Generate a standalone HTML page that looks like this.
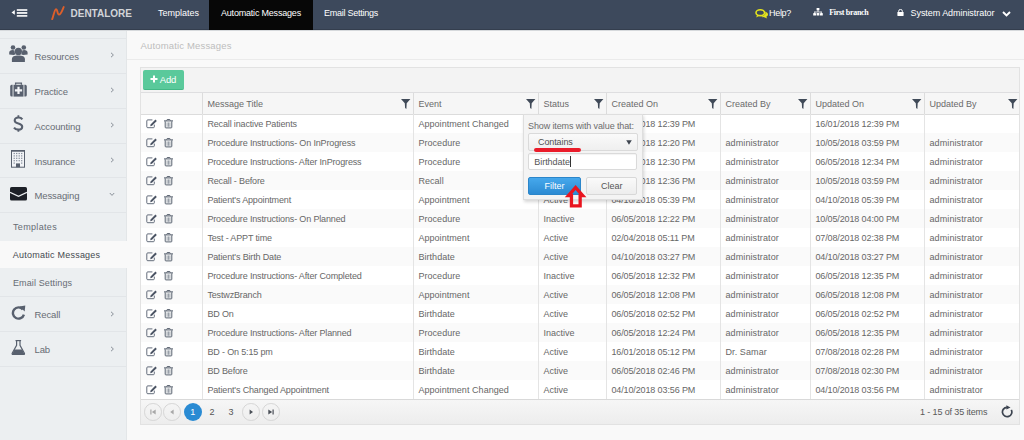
<!DOCTYPE html>
<html><head><meta charset="utf-8">
<style>
*{margin:0;padding:0;box-sizing:border-box}
html,body{width:1024px;height:440px;overflow:hidden;background:#f9f9f9;font-family:"Liberation Sans",sans-serif;font-size:9px;color:#5b5b5b}
.a{position:absolute;white-space:nowrap;line-height:10px}
svg{display:block}
</style></head><body>

<div class="a" style="left:0;top:0;width:1024px;height:29px;background:#3d495c"></div>
<div class="a" style="left:0;top:29px;width:1024px;height:1px;background:#343e4e"></div>
<div class="a" style="left:0;top:30px;width:1024px;height:1px;background:#d6d9dc"></div>
<svg class="a" style="left:11px;top:9px" width="17" height="8" viewBox="0 0 17 8"><path d="M0.5 3.4L3.8 1V5.8Z" fill="#fff"/><rect x="5.8" y="0.2" width="10.5" height="1.6" fill="#fff"/><rect x="5.8" y="3.1" width="10.5" height="1.7" fill="#fff"/><rect x="5.8" y="6.1" width="10.5" height="1.6" fill="#fff"/></svg>
<svg class="a" style="left:51px;top:6px" width="14" height="14" viewBox="0 0 14 14"><path d="M1.2 13.2C2.4 10 3.6 3.3 5.1 3.1C6.5 2.9 6.2 8.6 8 8.6C10 8.6 11.6 3.6 12.7 1" fill="none" stroke="#de5f2a" stroke-width="1.9" stroke-linecap="round"/></svg>
<div class="a" style="left:70.5px;top:8px;font-size:10px;font-weight:bold;color:#d2d4d8;line-height:11px">DENTALORE</div>
<div class="a" style="left:158px;top:8px;color:#fff">Templates</div>
<div class="a" style="left:209.4px;top:0;width:103.4px;height:30px;background:#070707"></div>
<div class="a" style="left:221px;top:8px;color:#fff;letter-spacing:-0.2px">Automatic Messages</div>
<div class="a" style="left:324px;top:8px;color:#fff;letter-spacing:-0.25px">Email Settings</div>
<svg class="a" style="left:755px;top:9px" width="14" height="10" viewBox="0 0 14 10"><path d="M6.2 6.6C8.6 6.6 10.4 5.3 10.4 3.6C10.4 1.9 8.6 0.8 6.2 0.8" fill="none"/><path d="M9.6 2.6C11.8 3.1 13 4.3 13 5.6C13 6.6 12.3 7.4 11.3 7.8L12.2 9.6L9.2 8.3C8 8.3 7 8 6.3 7.4C8.8 7.1 10.6 5.5 10.4 3.6Z" fill="#e4e41c"/><ellipse cx="5.3" cy="3.7" rx="4.3" ry="2.9" fill="none" stroke="#e4e41c" stroke-width="1.6"/><path d="M2.2 5.8L1.2 8.6L4.8 6.6Z" fill="#e4e41c"/></svg>
<div class="a" style="left:769px;top:7.8px;color:#fff;letter-spacing:-0.3px">Help?</div>
<svg class="a" style="left:813px;top:8.2px" width="10" height="8" viewBox="0 0 10 8"><rect x="3.6" y="0" width="2.8" height="2.4" rx="0.4" fill="#fff"/><rect x="4.6" y="2.4" width="0.8" height="1.6" fill="#fff"/><rect x="1.4" y="3.6" width="7.2" height="0.8" fill="#fff"/><rect x="1.4" y="3.6" width="0.8" height="1.4" fill="#fff"/><rect x="7.8" y="3.6" width="0.8" height="1.4" fill="#fff"/><rect x="0.2" y="5" width="2.8" height="2.6" rx="0.4" fill="#fff"/><rect x="3.6" y="5" width="2.8" height="2.6" rx="0.4" fill="#fff"/><rect x="7" y="5" width="2.8" height="2.6" rx="0.4" fill="#fff"/></svg>
<div class="a" style="left:829.2px;top:7.5px;color:#fff;font-family:'Liberation Serif',serif;font-weight:bold;font-size:8px;letter-spacing:-0.3px">First branch</div>
<svg class="a" style="left:897px;top:9px" width="7" height="7" viewBox="0 0 7 7"><path d="M1.7 3V2.2A1.8 1.8 0 0 1 5.3 2.2V3" fill="none" stroke="#fff" stroke-width="1"/><rect x="0.4" y="3" width="6.2" height="4" rx="0.4" fill="#fff"/></svg>
<div class="a" style="left:910.5px;top:7.8px;color:#fff;letter-spacing:-0.05px">System Administrator</div>
<svg class="a" style="left:1002px;top:11px" width="9" height="6" viewBox="0 0 9 6"><path d="M1 1L4.5 4.5L8 1" fill="none" stroke="#fff" stroke-width="1.9"/></svg>
<div class="a" style="left:0;top:31px;width:126px;height:409px;background:#eceff1"></div>
<div class="a" style="left:126px;top:31px;width:1px;height:409px;background:#e3e6e8"></div>
<div class="a" style="left:0;top:38px;width:126px;height:1px;background:#e2e5e8"></div>
<div class="a" style="left:34.5px;top:51.8px;color:#676c74;font-size:9.5px;letter-spacing:-0.12px">Resources</div>
<svg class="a" style="left:110px;top:52px" width="5" height="6" viewBox="0 0 5 6"><path d="M1 0.8L3.4 3L1 5.2" fill="none" stroke="#8a9099" stroke-width="1"/></svg>
<div class="a" style="left:0;top:73px;width:126px;height:1px;background:#e2e5e8"></div>
<div class="a" style="left:34.5px;top:86.8px;color:#676c74;font-size:9.5px;letter-spacing:-0.12px">Practice</div>
<svg class="a" style="left:110px;top:87px" width="5" height="6" viewBox="0 0 5 6"><path d="M1 0.8L3.4 3L1 5.2" fill="none" stroke="#8a9099" stroke-width="1"/></svg>
<div class="a" style="left:0;top:108px;width:126px;height:1px;background:#e2e5e8"></div>
<div class="a" style="left:34.5px;top:121.8px;color:#676c74;font-size:9.5px;letter-spacing:-0.12px">Accounting</div>
<svg class="a" style="left:110px;top:122px" width="5" height="6" viewBox="0 0 5 6"><path d="M1 0.8L3.4 3L1 5.2" fill="none" stroke="#8a9099" stroke-width="1"/></svg>
<div class="a" style="left:0;top:142.6px;width:126px;height:1px;background:#e2e5e8"></div>
<div class="a" style="left:34.5px;top:156.8px;color:#676c74;font-size:9.5px;letter-spacing:-0.12px">Insurance</div>
<svg class="a" style="left:110px;top:156.6px" width="5" height="6" viewBox="0 0 5 6"><path d="M1 0.8L3.4 3L1 5.2" fill="none" stroke="#8a9099" stroke-width="1"/></svg>
<div class="a" style="left:0;top:177.4px;width:126px;height:1px;background:#e2e5e8"></div>
<div class="a" style="left:34.5px;top:190.8px;color:#676c74;font-size:9.5px;letter-spacing:-0.12px">Messaging</div>
<svg class="a" style="left:109px;top:192.4px" width="6" height="5" viewBox="0 0 6 5"><path d="M0.8 1L3 3.4L5.2 1" fill="none" stroke="#8a9099" stroke-width="1"/></svg>
<div class="a" style="left:0;top:212px;width:126px;height:1px;background:#e2e5e8"></div>
<div class="a" style="left:13px;top:221.5px;color:#676c74;letter-spacing:0.33px">Templates</div>
<div class="a" style="left:0;top:240.6px;width:127px;height:27.6px;background:#f9f9f9"></div>
<div class="a" style="left:12.8px;top:249.5px;color:#45494f;letter-spacing:0.22px">Automatic Messages</div>
<div class="a" style="left:13px;top:277.5px;color:#676c74;letter-spacing:0.12px">Email Settings</div>
<div class="a" style="left:0;top:296px;width:126px;height:1px;background:#e2e5e8"></div>
<div class="a" style="left:0;top:331px;width:126px;height:1px;background:#e2e5e8"></div>
<div class="a" style="left:0;top:366px;width:126px;height:1px;background:#e2e5e8"></div>
<div class="a" style="left:34.5px;top:309.8px;color:#676c74;font-size:9.5px;letter-spacing:-0.12px">Recall</div>
<svg class="a" style="left:110px;top:311px" width="5" height="6" viewBox="0 0 5 6"><path d="M1 0.8L3.4 3L1 5.2" fill="none" stroke="#8a9099" stroke-width="1"/></svg>
<div class="a" style="left:34.5px;top:344.8px;color:#676c74;font-size:9.5px;letter-spacing:-0.12px">Lab</div>
<svg class="a" style="left:110px;top:346px" width="5" height="6" viewBox="0 0 5 6"><path d="M1 0.8L3.4 3L1 5.2" fill="none" stroke="#8a9099" stroke-width="1"/></svg>
<svg class="a" style="left:9px;top:45px" width="19" height="18" viewBox="0 0 19 18"><circle cx="4" cy="2.5" r="2.3" fill="#58606e"/><circle cx="14.8" cy="2.5" r="2.3" fill="#58606e"/><circle cx="9.4" cy="6.4" r="3.6" fill="#58606e"/><path d="M0.2 9.6V7.6C0.2 5.9 1.6 5 3.6 5C4.6 5 5.2 5.2 5.6 5.5C5.5 7 5.9 8.4 6.6 9.3C5.7 9.6 5.1 9.8 4.7 10.1Z" fill="#58606e"/><path d="M18.6 9.6V7.6C18.6 5.9 17.2 5 15.2 5C14.2 5 13.6 5.2 13.2 5.5C13.3 7 12.9 8.4 12.2 9.3C13.1 9.6 13.7 9.8 14.1 10.1Z" fill="#58606e"/><path d="M2.9 17V14.2C2.9 11.4 5.4 10.4 9.4 10.4C13.4 10.4 15.9 11.4 15.9 14.2V17Z" fill="#58606e"/></svg>
<svg class="a" style="left:9.8px;top:81.5px" width="17" height="15" viewBox="0 0 17 15"><path d="M5.6 2.8V1.1H11.4V2.8" fill="none" stroke="#58606e" stroke-width="1.3"/><path d="M2.6 2.8V14.6H1.6Q0.2 14.6 0.2 13V4.4Q0.2 2.8 1.6 2.8Z" fill="#58606e"/><path d="M14.4 2.8V14.6H15.4Q16.8 14.6 16.8 13V4.4Q16.8 2.8 15.4 2.8Z" fill="#58606e"/><rect x="3.5" y="2.8" width="10" height="11.8" fill="#58606e"/><path d="M8.5 4.8V12M4.9 8.4H12.1" stroke="#f4f6f8" stroke-width="2.2"/></svg>
<svg class="a" style="left:13px;top:115px" width="11" height="17" viewBox="0 0 11 17"><path d="M5.4 0.2V2.6M5.4 14.4V16.8" stroke="#58606e" stroke-width="1.8"/><path d="M9.3 4.4C8.6 3.2 7.3 2.5 5.4 2.5C3.2 2.5 1.7 3.6 1.7 5.4C1.7 7.3 3.4 7.9 5.4 8.5C7.5 9.1 9.2 9.9 9.2 11.7C9.2 13.6 7.6 14.6 5.3 14.6C3.4 14.6 1.9 13.9 1.0 12.6" fill="none" stroke="#58606e" stroke-width="2.1"/></svg>
<svg class="a" style="left:11px;top:149.8px" width="14" height="18" viewBox="0 0 14 18"><rect x="0.5" y="0.8" width="13" height="16.4" fill="#f2f4f7" stroke="#58606e" stroke-width="1"/><rect x="0" y="0" width="14" height="1.6" fill="#58606e"/><rect x="2.6" y="2.9" width="1.2" height="1.2" fill="#7d8593"/><rect x="5.1" y="2.9" width="1.2" height="1.2" fill="#7d8593"/><rect x="7.6" y="2.9" width="1.2" height="1.2" fill="#7d8593"/><rect x="10.1" y="2.9" width="1.2" height="1.2" fill="#7d8593"/><rect x="2.6" y="5.3" width="1.2" height="1.2" fill="#7d8593"/><rect x="5.1" y="5.3" width="1.2" height="1.2" fill="#7d8593"/><rect x="7.6" y="5.3" width="1.2" height="1.2" fill="#7d8593"/><rect x="10.1" y="5.3" width="1.2" height="1.2" fill="#7d8593"/><rect x="2.6" y="7.699999999999999" width="1.2" height="1.2" fill="#7d8593"/><rect x="5.1" y="7.699999999999999" width="1.2" height="1.2" fill="#7d8593"/><rect x="7.6" y="7.699999999999999" width="1.2" height="1.2" fill="#7d8593"/><rect x="10.1" y="7.699999999999999" width="1.2" height="1.2" fill="#7d8593"/><rect x="2.6" y="10.1" width="1.2" height="1.2" fill="#7d8593"/><rect x="5.1" y="10.1" width="1.2" height="1.2" fill="#7d8593"/><rect x="7.6" y="10.1" width="1.2" height="1.2" fill="#7d8593"/><rect x="10.1" y="10.1" width="1.2" height="1.2" fill="#7d8593"/><rect x="2.6" y="12.5" width="1.2" height="1.2" fill="#7d8593"/><rect x="10.1" y="12.5" width="1.2" height="1.2" fill="#7d8593"/><rect x="5" y="13.4" width="4" height="3.8" fill="#58606e"/></svg>
<svg class="a" style="left:10px;top:187px" width="17" height="14" viewBox="0 0 17 14"><rect x="0" y="0" width="17" height="13.6" rx="1.6" fill="#1d2027"/><path d="M0 5.4L8.5 9.3L17 5.4" fill="none" stroke="#eceff1" stroke-width="1.3"/></svg>
<svg class="a" style="left:11px;top:305px" width="15" height="15" viewBox="0 0 15 15"><path d="M11.8 4.4A5.6 5.6 0 1 0 12.9 9.6" fill="none" stroke="#58606e" stroke-width="2.4"/><path d="M8.4 1.4L14.3 0.6L13.7 6.6Z" fill="#58606e"/></svg>
<svg class="a" style="left:11px;top:340px" width="15" height="15" viewBox="0 0 15 15"><path d="M4.5 0.6H10.1" stroke="#58606e" stroke-width="1.2"/><path d="M5.6 0.8V5.4L1.2 13.2Q0.8 14.4 2 14.4H12.6Q13.8 14.4 13.4 13.2L9 5.4V0.8" fill="none" stroke="#58606e" stroke-width="1.2"/><path d="M3.4 9.5H11.2L13.4 14.2H1.2Z" fill="#58606e"/></svg>
<div class="a" style="left:140.5px;top:40.5px;color:#bdbdbd;font-size:9.5px;letter-spacing:0.16px">Automatic Messages</div>
<div class="a" style="left:127px;top:59px;width:897px;height:1px;background:#ebebeb"></div>
<div class="a" style="left:140px;top:67px;width:880px;height:357.5px;border:1px solid #e2e2e2;background:#fff"></div>
<div class="a" style="left:141px;top:68px;width:878px;height:25px;background:#f3f3f3;border-bottom:1px solid #dedee0"></div>
<div class="a" style="left:142.9px;top:70px;width:41.1px;height:19.8px;background:#5ac99b;border-bottom:1px solid #43b886;border-radius:2px"></div>
<svg class="a" style="left:149.8px;top:75.3px" width="8" height="8" viewBox="0 0 8 8"><path d="M4 0.5V7.5M0.5 4H7.5" stroke="#fff" stroke-width="2"/></svg>
<div class="a" style="left:159.8px;top:75.2px;color:#fff;font-size:9.5px;letter-spacing:-0.2px">Add</div>
<div class="a" style="left:141px;top:93px;width:878px;height:21px;background:#f6f6f6"></div>
<div class="a" style="left:202px;top:93px;width:1px;height:20.5px;background:#dcdcdc"></div>
<div class="a" style="left:207.4px;top:98.5px;color:#6a6a6a">Message Title</div>
<div class="a" style="left:401px;top:99px"><svg width="10" height="11" viewBox="0 0 10 11"><path d="M0 0.1H9.4L5.7 4.3L5.4 10L4.1 9L3.8 4.3Z" fill="#404a58"/></svg></div>
<div class="a" style="left:413px;top:93px;width:1px;height:20.5px;background:#dcdcdc"></div>
<div class="a" style="left:418.4px;top:98.5px;color:#6a6a6a">Event</div>
<div class="a" style="left:526px;top:99px"><svg width="10" height="11" viewBox="0 0 10 11"><path d="M0 0.1H9.4L5.7 4.3L5.4 10L4.1 9L3.8 4.3Z" fill="#404a58"/></svg></div>
<div class="a" style="left:538px;top:93px;width:1px;height:20.5px;background:#dcdcdc"></div>
<div class="a" style="left:543.4px;top:98.5px;color:#6a6a6a">Status</div>
<div class="a" style="left:594px;top:99px"><svg width="10" height="11" viewBox="0 0 10 11"><path d="M0 0.1H9.4L5.7 4.3L5.4 10L4.1 9L3.8 4.3Z" fill="#404a58"/></svg></div>
<div class="a" style="left:606px;top:93px;width:1px;height:20.5px;background:#dcdcdc"></div>
<div class="a" style="left:611.4px;top:98.5px;color:#6a6a6a">Created On</div>
<div class="a" style="left:708px;top:99px"><svg width="10" height="11" viewBox="0 0 10 11"><path d="M0 0.1H9.4L5.7 4.3L5.4 10L4.1 9L3.8 4.3Z" fill="#404a58"/></svg></div>
<div class="a" style="left:720px;top:93px;width:1px;height:20.5px;background:#dcdcdc"></div>
<div class="a" style="left:725.4px;top:98.5px;color:#6a6a6a">Created By</div>
<div class="a" style="left:798px;top:99px"><svg width="10" height="11" viewBox="0 0 10 11"><path d="M0 0.1H9.4L5.7 4.3L5.4 10L4.1 9L3.8 4.3Z" fill="#404a58"/></svg></div>
<div class="a" style="left:810px;top:93px;width:1px;height:20.5px;background:#dcdcdc"></div>
<div class="a" style="left:815.4px;top:98.5px;color:#6a6a6a">Updated On</div>
<div class="a" style="left:912px;top:99px"><svg width="10" height="11" viewBox="0 0 10 11"><path d="M0 0.1H9.4L5.7 4.3L5.4 10L4.1 9L3.8 4.3Z" fill="#404a58"/></svg></div>
<div class="a" style="left:924px;top:93px;width:1px;height:20.5px;background:#dcdcdc"></div>
<div class="a" style="left:929.4px;top:98.5px;color:#6a6a6a">Updated By</div>
<div class="a" style="left:1007.5px;top:99px"><svg width="10" height="11" viewBox="0 0 10 11"><path d="M0 0.1H9.4L5.7 4.3L5.4 10L4.1 9L3.8 4.3Z" fill="#404a58"/></svg></div>
<div class="a" style="left:141px;top:114.0px;width:878px;height:19px;background:#fff"></div>
<div class="a" style="left:146px;top:118.7px"><svg width="11" height="10" viewBox="0 0 11 10"><path d="M6.4 0.9H1.8Q0.8 0.9 0.8 1.9V7.8Q0.8 8.7 1.8 8.7H7.4Q8.3 8.7 8.3 7.8V5.6" fill="none" stroke="#5c6574" stroke-width="0.95"/><path d="M4.2 7.2L4.6 5.4L9.4 0.6L10.8 2L6 6.8Z" fill="#4a5363"/></svg></div>
<div class="a" style="left:163.6px;top:118.9px"><svg width="9" height="10" viewBox="0 0 9 10"><path d="M2.6 1.5L3.2 0.5H5.8L6.4 1.5" fill="none" stroke="#4f5867" stroke-width="0.9"/><rect x="0" y="1.4" width="9" height="1" fill="#4f5867"/><path d="M1.2 2.4V8.2Q1.2 8.9 1.9 8.9H7.1Q7.8 8.9 7.8 8.2V2.4" fill="none" stroke="#4f5867" stroke-width="0.95"/><path d="M3.1 3.4V7.8M4.5 3.4V7.8M5.9 3.4V7.8" stroke="#6f7885" stroke-width="0.7"/></svg></div>
<div class="a" style="left:207.4px;top:119.2px;color:#676767;letter-spacing:-0.15px">Recall inactive Patients</div>
<div class="a" style="left:418.4px;top:119.2px;color:#676767;letter-spacing:0.05px">Appointment Changed</div>
<div class="a" style="left:611.4px;top:119.2px;color:#676767;letter-spacing:-0.12px">04/10/2018 12:39 PM</div>
<div class="a" style="left:815.4px;top:119.2px;color:#676767;letter-spacing:-0.12px">16/01/2018 12:39 PM</div>
<div class="a" style="left:141px;top:133.0px;width:878px;height:19px;background:#fafafa"></div>
<div class="a" style="left:146px;top:137.7px"><svg width="11" height="10" viewBox="0 0 11 10"><path d="M6.4 0.9H1.8Q0.8 0.9 0.8 1.9V7.8Q0.8 8.7 1.8 8.7H7.4Q8.3 8.7 8.3 7.8V5.6" fill="none" stroke="#5c6574" stroke-width="0.95"/><path d="M4.2 7.2L4.6 5.4L9.4 0.6L10.8 2L6 6.8Z" fill="#4a5363"/></svg></div>
<div class="a" style="left:163.6px;top:137.9px"><svg width="9" height="10" viewBox="0 0 9 10"><path d="M2.6 1.5L3.2 0.5H5.8L6.4 1.5" fill="none" stroke="#4f5867" stroke-width="0.9"/><rect x="0" y="1.4" width="9" height="1" fill="#4f5867"/><path d="M1.2 2.4V8.2Q1.2 8.9 1.9 8.9H7.1Q7.8 8.9 7.8 8.2V2.4" fill="none" stroke="#4f5867" stroke-width="0.95"/><path d="M3.1 3.4V7.8M4.5 3.4V7.8M5.9 3.4V7.8" stroke="#6f7885" stroke-width="0.7"/></svg></div>
<div class="a" style="left:207.4px;top:138.2px;color:#676767;letter-spacing:-0.15px">Procedure Instructions- On InProgress</div>
<div class="a" style="left:418.4px;top:138.2px;color:#676767;letter-spacing:0.05px">Procedure</div>
<div class="a" style="left:543.4px;top:138.2px;color:#676767;letter-spacing:0px">Active</div>
<div class="a" style="left:611.4px;top:138.2px;color:#676767;letter-spacing:-0.12px">10/05/2018 12:20 PM</div>
<div class="a" style="left:725.4px;top:138.2px;color:#676767;letter-spacing:0.12px">administrator</div>
<div class="a" style="left:815.4px;top:138.2px;color:#676767;letter-spacing:-0.12px">10/05/2018 03:59 PM</div>
<div class="a" style="left:929.4px;top:138.2px;color:#676767;letter-spacing:0.12px">administrator</div>
<div class="a" style="left:141px;top:152.0px;width:878px;height:19px;background:#fff"></div>
<div class="a" style="left:146px;top:156.7px"><svg width="11" height="10" viewBox="0 0 11 10"><path d="M6.4 0.9H1.8Q0.8 0.9 0.8 1.9V7.8Q0.8 8.7 1.8 8.7H7.4Q8.3 8.7 8.3 7.8V5.6" fill="none" stroke="#5c6574" stroke-width="0.95"/><path d="M4.2 7.2L4.6 5.4L9.4 0.6L10.8 2L6 6.8Z" fill="#4a5363"/></svg></div>
<div class="a" style="left:163.6px;top:156.9px"><svg width="9" height="10" viewBox="0 0 9 10"><path d="M2.6 1.5L3.2 0.5H5.8L6.4 1.5" fill="none" stroke="#4f5867" stroke-width="0.9"/><rect x="0" y="1.4" width="9" height="1" fill="#4f5867"/><path d="M1.2 2.4V8.2Q1.2 8.9 1.9 8.9H7.1Q7.8 8.9 7.8 8.2V2.4" fill="none" stroke="#4f5867" stroke-width="0.95"/><path d="M3.1 3.4V7.8M4.5 3.4V7.8M5.9 3.4V7.8" stroke="#6f7885" stroke-width="0.7"/></svg></div>
<div class="a" style="left:207.4px;top:157.2px;color:#676767;letter-spacing:-0.15px">Procedure Instructions- After InProgress</div>
<div class="a" style="left:418.4px;top:157.2px;color:#676767;letter-spacing:0.05px">Procedure</div>
<div class="a" style="left:543.4px;top:157.2px;color:#676767;letter-spacing:0px">Active</div>
<div class="a" style="left:611.4px;top:157.2px;color:#676767;letter-spacing:-0.12px">06/05/2018 12:30 PM</div>
<div class="a" style="left:725.4px;top:157.2px;color:#676767;letter-spacing:0.12px">administrator</div>
<div class="a" style="left:815.4px;top:157.2px;color:#676767;letter-spacing:-0.12px">06/05/2018 12:34 PM</div>
<div class="a" style="left:929.4px;top:157.2px;color:#676767;letter-spacing:0.12px">administrator</div>
<div class="a" style="left:141px;top:171.0px;width:878px;height:19px;background:#fafafa"></div>
<div class="a" style="left:146px;top:175.7px"><svg width="11" height="10" viewBox="0 0 11 10"><path d="M6.4 0.9H1.8Q0.8 0.9 0.8 1.9V7.8Q0.8 8.7 1.8 8.7H7.4Q8.3 8.7 8.3 7.8V5.6" fill="none" stroke="#5c6574" stroke-width="0.95"/><path d="M4.2 7.2L4.6 5.4L9.4 0.6L10.8 2L6 6.8Z" fill="#4a5363"/></svg></div>
<div class="a" style="left:163.6px;top:175.9px"><svg width="9" height="10" viewBox="0 0 9 10"><path d="M2.6 1.5L3.2 0.5H5.8L6.4 1.5" fill="none" stroke="#4f5867" stroke-width="0.9"/><rect x="0" y="1.4" width="9" height="1" fill="#4f5867"/><path d="M1.2 2.4V8.2Q1.2 8.9 1.9 8.9H7.1Q7.8 8.9 7.8 8.2V2.4" fill="none" stroke="#4f5867" stroke-width="0.95"/><path d="M3.1 3.4V7.8M4.5 3.4V7.8M5.9 3.4V7.8" stroke="#6f7885" stroke-width="0.7"/></svg></div>
<div class="a" style="left:207.4px;top:176.2px;color:#676767;letter-spacing:-0.15px">Recall - Before</div>
<div class="a" style="left:418.4px;top:176.2px;color:#676767;letter-spacing:0.05px">Recall</div>
<div class="a" style="left:543.4px;top:176.2px;color:#676767;letter-spacing:0px">Active</div>
<div class="a" style="left:611.4px;top:176.2px;color:#676767;letter-spacing:-0.12px">10/05/2018 12:36 PM</div>
<div class="a" style="left:725.4px;top:176.2px;color:#676767;letter-spacing:0.12px">administrator</div>
<div class="a" style="left:815.4px;top:176.2px;color:#676767;letter-spacing:-0.12px">10/05/2018 03:59 PM</div>
<div class="a" style="left:929.4px;top:176.2px;color:#676767;letter-spacing:0.12px">administrator</div>
<div class="a" style="left:141px;top:190.0px;width:878px;height:19px;background:#fff"></div>
<div class="a" style="left:146px;top:194.7px"><svg width="11" height="10" viewBox="0 0 11 10"><path d="M6.4 0.9H1.8Q0.8 0.9 0.8 1.9V7.8Q0.8 8.7 1.8 8.7H7.4Q8.3 8.7 8.3 7.8V5.6" fill="none" stroke="#5c6574" stroke-width="0.95"/><path d="M4.2 7.2L4.6 5.4L9.4 0.6L10.8 2L6 6.8Z" fill="#4a5363"/></svg></div>
<div class="a" style="left:163.6px;top:194.9px"><svg width="9" height="10" viewBox="0 0 9 10"><path d="M2.6 1.5L3.2 0.5H5.8L6.4 1.5" fill="none" stroke="#4f5867" stroke-width="0.9"/><rect x="0" y="1.4" width="9" height="1" fill="#4f5867"/><path d="M1.2 2.4V8.2Q1.2 8.9 1.9 8.9H7.1Q7.8 8.9 7.8 8.2V2.4" fill="none" stroke="#4f5867" stroke-width="0.95"/><path d="M3.1 3.4V7.8M4.5 3.4V7.8M5.9 3.4V7.8" stroke="#6f7885" stroke-width="0.7"/></svg></div>
<div class="a" style="left:207.4px;top:195.2px;color:#676767;letter-spacing:-0.15px">Patient&#39;s Appointment</div>
<div class="a" style="left:418.4px;top:195.2px;color:#676767;letter-spacing:0.05px">Appointment</div>
<div class="a" style="left:543.4px;top:195.2px;color:#676767;letter-spacing:0px">Active</div>
<div class="a" style="left:611.4px;top:195.2px;color:#676767;letter-spacing:-0.12px">04/10/2018 05:39 PM</div>
<div class="a" style="left:725.4px;top:195.2px;color:#676767;letter-spacing:0.12px">administrator</div>
<div class="a" style="left:815.4px;top:195.2px;color:#676767;letter-spacing:-0.12px">04/10/2018 05:39 PM</div>
<div class="a" style="left:929.4px;top:195.2px;color:#676767;letter-spacing:0.12px">administrator</div>
<div class="a" style="left:141px;top:209.0px;width:878px;height:19px;background:#fafafa"></div>
<div class="a" style="left:146px;top:213.7px"><svg width="11" height="10" viewBox="0 0 11 10"><path d="M6.4 0.9H1.8Q0.8 0.9 0.8 1.9V7.8Q0.8 8.7 1.8 8.7H7.4Q8.3 8.7 8.3 7.8V5.6" fill="none" stroke="#5c6574" stroke-width="0.95"/><path d="M4.2 7.2L4.6 5.4L9.4 0.6L10.8 2L6 6.8Z" fill="#4a5363"/></svg></div>
<div class="a" style="left:163.6px;top:213.9px"><svg width="9" height="10" viewBox="0 0 9 10"><path d="M2.6 1.5L3.2 0.5H5.8L6.4 1.5" fill="none" stroke="#4f5867" stroke-width="0.9"/><rect x="0" y="1.4" width="9" height="1" fill="#4f5867"/><path d="M1.2 2.4V8.2Q1.2 8.9 1.9 8.9H7.1Q7.8 8.9 7.8 8.2V2.4" fill="none" stroke="#4f5867" stroke-width="0.95"/><path d="M3.1 3.4V7.8M4.5 3.4V7.8M5.9 3.4V7.8" stroke="#6f7885" stroke-width="0.7"/></svg></div>
<div class="a" style="left:207.4px;top:214.2px;color:#676767;letter-spacing:-0.15px">Procedure Instructions- On Planned</div>
<div class="a" style="left:418.4px;top:214.2px;color:#676767;letter-spacing:0.05px">Procedure</div>
<div class="a" style="left:543.4px;top:214.2px;color:#676767;letter-spacing:0px">Inactive</div>
<div class="a" style="left:611.4px;top:214.2px;color:#676767;letter-spacing:-0.12px">06/05/2018 12:22 PM</div>
<div class="a" style="left:725.4px;top:214.2px;color:#676767;letter-spacing:0.12px">administrator</div>
<div class="a" style="left:815.4px;top:214.2px;color:#676767;letter-spacing:-0.12px">10/05/2018 04:00 PM</div>
<div class="a" style="left:929.4px;top:214.2px;color:#676767;letter-spacing:0.12px">administrator</div>
<div class="a" style="left:141px;top:228.0px;width:878px;height:19px;background:#fff"></div>
<div class="a" style="left:146px;top:232.7px"><svg width="11" height="10" viewBox="0 0 11 10"><path d="M6.4 0.9H1.8Q0.8 0.9 0.8 1.9V7.8Q0.8 8.7 1.8 8.7H7.4Q8.3 8.7 8.3 7.8V5.6" fill="none" stroke="#5c6574" stroke-width="0.95"/><path d="M4.2 7.2L4.6 5.4L9.4 0.6L10.8 2L6 6.8Z" fill="#4a5363"/></svg></div>
<div class="a" style="left:163.6px;top:232.9px"><svg width="9" height="10" viewBox="0 0 9 10"><path d="M2.6 1.5L3.2 0.5H5.8L6.4 1.5" fill="none" stroke="#4f5867" stroke-width="0.9"/><rect x="0" y="1.4" width="9" height="1" fill="#4f5867"/><path d="M1.2 2.4V8.2Q1.2 8.9 1.9 8.9H7.1Q7.8 8.9 7.8 8.2V2.4" fill="none" stroke="#4f5867" stroke-width="0.95"/><path d="M3.1 3.4V7.8M4.5 3.4V7.8M5.9 3.4V7.8" stroke="#6f7885" stroke-width="0.7"/></svg></div>
<div class="a" style="left:207.4px;top:233.2px;color:#676767;letter-spacing:-0.15px">Test - APPT time</div>
<div class="a" style="left:418.4px;top:233.2px;color:#676767;letter-spacing:0.05px">Appointment</div>
<div class="a" style="left:543.4px;top:233.2px;color:#676767;letter-spacing:0px">Active</div>
<div class="a" style="left:611.4px;top:233.2px;color:#676767;letter-spacing:-0.12px">02/04/2018 05:11 PM</div>
<div class="a" style="left:725.4px;top:233.2px;color:#676767;letter-spacing:0.12px">administrator</div>
<div class="a" style="left:815.4px;top:233.2px;color:#676767;letter-spacing:-0.12px">07/08/2018 02:38 PM</div>
<div class="a" style="left:929.4px;top:233.2px;color:#676767;letter-spacing:0.12px">administrator</div>
<div class="a" style="left:141px;top:247.0px;width:878px;height:19px;background:#fafafa"></div>
<div class="a" style="left:146px;top:251.7px"><svg width="11" height="10" viewBox="0 0 11 10"><path d="M6.4 0.9H1.8Q0.8 0.9 0.8 1.9V7.8Q0.8 8.7 1.8 8.7H7.4Q8.3 8.7 8.3 7.8V5.6" fill="none" stroke="#5c6574" stroke-width="0.95"/><path d="M4.2 7.2L4.6 5.4L9.4 0.6L10.8 2L6 6.8Z" fill="#4a5363"/></svg></div>
<div class="a" style="left:163.6px;top:251.9px"><svg width="9" height="10" viewBox="0 0 9 10"><path d="M2.6 1.5L3.2 0.5H5.8L6.4 1.5" fill="none" stroke="#4f5867" stroke-width="0.9"/><rect x="0" y="1.4" width="9" height="1" fill="#4f5867"/><path d="M1.2 2.4V8.2Q1.2 8.9 1.9 8.9H7.1Q7.8 8.9 7.8 8.2V2.4" fill="none" stroke="#4f5867" stroke-width="0.95"/><path d="M3.1 3.4V7.8M4.5 3.4V7.8M5.9 3.4V7.8" stroke="#6f7885" stroke-width="0.7"/></svg></div>
<div class="a" style="left:207.4px;top:252.2px;color:#676767;letter-spacing:-0.15px">Patient&#39;s Birth Date</div>
<div class="a" style="left:418.4px;top:252.2px;color:#676767;letter-spacing:0.05px">Birthdate</div>
<div class="a" style="left:543.4px;top:252.2px;color:#676767;letter-spacing:0px">Active</div>
<div class="a" style="left:611.4px;top:252.2px;color:#676767;letter-spacing:-0.12px">04/10/2018 03:27 PM</div>
<div class="a" style="left:725.4px;top:252.2px;color:#676767;letter-spacing:0.12px">administrator</div>
<div class="a" style="left:815.4px;top:252.2px;color:#676767;letter-spacing:-0.12px">04/10/2018 03:27 PM</div>
<div class="a" style="left:929.4px;top:252.2px;color:#676767;letter-spacing:0.12px">administrator</div>
<div class="a" style="left:141px;top:266.0px;width:878px;height:19px;background:#fff"></div>
<div class="a" style="left:146px;top:270.7px"><svg width="11" height="10" viewBox="0 0 11 10"><path d="M6.4 0.9H1.8Q0.8 0.9 0.8 1.9V7.8Q0.8 8.7 1.8 8.7H7.4Q8.3 8.7 8.3 7.8V5.6" fill="none" stroke="#5c6574" stroke-width="0.95"/><path d="M4.2 7.2L4.6 5.4L9.4 0.6L10.8 2L6 6.8Z" fill="#4a5363"/></svg></div>
<div class="a" style="left:163.6px;top:270.9px"><svg width="9" height="10" viewBox="0 0 9 10"><path d="M2.6 1.5L3.2 0.5H5.8L6.4 1.5" fill="none" stroke="#4f5867" stroke-width="0.9"/><rect x="0" y="1.4" width="9" height="1" fill="#4f5867"/><path d="M1.2 2.4V8.2Q1.2 8.9 1.9 8.9H7.1Q7.8 8.9 7.8 8.2V2.4" fill="none" stroke="#4f5867" stroke-width="0.95"/><path d="M3.1 3.4V7.8M4.5 3.4V7.8M5.9 3.4V7.8" stroke="#6f7885" stroke-width="0.7"/></svg></div>
<div class="a" style="left:207.4px;top:271.2px;color:#676767;letter-spacing:-0.15px">Procedure Instructions- After Completed</div>
<div class="a" style="left:418.4px;top:271.2px;color:#676767;letter-spacing:0.05px">Procedure</div>
<div class="a" style="left:543.4px;top:271.2px;color:#676767;letter-spacing:0px">Inactive</div>
<div class="a" style="left:611.4px;top:271.2px;color:#676767;letter-spacing:-0.12px">06/05/2018 12:32 PM</div>
<div class="a" style="left:725.4px;top:271.2px;color:#676767;letter-spacing:0.12px">administrator</div>
<div class="a" style="left:815.4px;top:271.2px;color:#676767;letter-spacing:-0.12px">06/05/2018 12:35 PM</div>
<div class="a" style="left:929.4px;top:271.2px;color:#676767;letter-spacing:0.12px">administrator</div>
<div class="a" style="left:141px;top:285.0px;width:878px;height:19px;background:#fafafa"></div>
<div class="a" style="left:146px;top:289.7px"><svg width="11" height="10" viewBox="0 0 11 10"><path d="M6.4 0.9H1.8Q0.8 0.9 0.8 1.9V7.8Q0.8 8.7 1.8 8.7H7.4Q8.3 8.7 8.3 7.8V5.6" fill="none" stroke="#5c6574" stroke-width="0.95"/><path d="M4.2 7.2L4.6 5.4L9.4 0.6L10.8 2L6 6.8Z" fill="#4a5363"/></svg></div>
<div class="a" style="left:163.6px;top:289.9px"><svg width="9" height="10" viewBox="0 0 9 10"><path d="M2.6 1.5L3.2 0.5H5.8L6.4 1.5" fill="none" stroke="#4f5867" stroke-width="0.9"/><rect x="0" y="1.4" width="9" height="1" fill="#4f5867"/><path d="M1.2 2.4V8.2Q1.2 8.9 1.9 8.9H7.1Q7.8 8.9 7.8 8.2V2.4" fill="none" stroke="#4f5867" stroke-width="0.95"/><path d="M3.1 3.4V7.8M4.5 3.4V7.8M5.9 3.4V7.8" stroke="#6f7885" stroke-width="0.7"/></svg></div>
<div class="a" style="left:207.4px;top:290.2px;color:#676767;letter-spacing:-0.15px">TestwzBranch</div>
<div class="a" style="left:418.4px;top:290.2px;color:#676767;letter-spacing:0.05px">Appointment</div>
<div class="a" style="left:543.4px;top:290.2px;color:#676767;letter-spacing:0px">Active</div>
<div class="a" style="left:611.4px;top:290.2px;color:#676767;letter-spacing:-0.12px">06/05/2018 12:08 PM</div>
<div class="a" style="left:725.4px;top:290.2px;color:#676767;letter-spacing:0.12px">administrator</div>
<div class="a" style="left:815.4px;top:290.2px;color:#676767;letter-spacing:-0.12px">06/05/2018 12:08 PM</div>
<div class="a" style="left:929.4px;top:290.2px;color:#676767;letter-spacing:0.12px">administrator</div>
<div class="a" style="left:141px;top:304.0px;width:878px;height:19px;background:#fff"></div>
<div class="a" style="left:146px;top:308.7px"><svg width="11" height="10" viewBox="0 0 11 10"><path d="M6.4 0.9H1.8Q0.8 0.9 0.8 1.9V7.8Q0.8 8.7 1.8 8.7H7.4Q8.3 8.7 8.3 7.8V5.6" fill="none" stroke="#5c6574" stroke-width="0.95"/><path d="M4.2 7.2L4.6 5.4L9.4 0.6L10.8 2L6 6.8Z" fill="#4a5363"/></svg></div>
<div class="a" style="left:163.6px;top:308.9px"><svg width="9" height="10" viewBox="0 0 9 10"><path d="M2.6 1.5L3.2 0.5H5.8L6.4 1.5" fill="none" stroke="#4f5867" stroke-width="0.9"/><rect x="0" y="1.4" width="9" height="1" fill="#4f5867"/><path d="M1.2 2.4V8.2Q1.2 8.9 1.9 8.9H7.1Q7.8 8.9 7.8 8.2V2.4" fill="none" stroke="#4f5867" stroke-width="0.95"/><path d="M3.1 3.4V7.8M4.5 3.4V7.8M5.9 3.4V7.8" stroke="#6f7885" stroke-width="0.7"/></svg></div>
<div class="a" style="left:207.4px;top:309.2px;color:#676767;letter-spacing:-0.15px">BD On</div>
<div class="a" style="left:418.4px;top:309.2px;color:#676767;letter-spacing:0.05px">Birthdate</div>
<div class="a" style="left:543.4px;top:309.2px;color:#676767;letter-spacing:0px">Active</div>
<div class="a" style="left:611.4px;top:309.2px;color:#676767;letter-spacing:-0.12px">06/05/2018 02:52 PM</div>
<div class="a" style="left:725.4px;top:309.2px;color:#676767;letter-spacing:0.12px">administrator</div>
<div class="a" style="left:815.4px;top:309.2px;color:#676767;letter-spacing:-0.12px">06/05/2018 02:52 PM</div>
<div class="a" style="left:929.4px;top:309.2px;color:#676767;letter-spacing:0.12px">administrator</div>
<div class="a" style="left:141px;top:323.0px;width:878px;height:19px;background:#fafafa"></div>
<div class="a" style="left:146px;top:327.7px"><svg width="11" height="10" viewBox="0 0 11 10"><path d="M6.4 0.9H1.8Q0.8 0.9 0.8 1.9V7.8Q0.8 8.7 1.8 8.7H7.4Q8.3 8.7 8.3 7.8V5.6" fill="none" stroke="#5c6574" stroke-width="0.95"/><path d="M4.2 7.2L4.6 5.4L9.4 0.6L10.8 2L6 6.8Z" fill="#4a5363"/></svg></div>
<div class="a" style="left:163.6px;top:327.9px"><svg width="9" height="10" viewBox="0 0 9 10"><path d="M2.6 1.5L3.2 0.5H5.8L6.4 1.5" fill="none" stroke="#4f5867" stroke-width="0.9"/><rect x="0" y="1.4" width="9" height="1" fill="#4f5867"/><path d="M1.2 2.4V8.2Q1.2 8.9 1.9 8.9H7.1Q7.8 8.9 7.8 8.2V2.4" fill="none" stroke="#4f5867" stroke-width="0.95"/><path d="M3.1 3.4V7.8M4.5 3.4V7.8M5.9 3.4V7.8" stroke="#6f7885" stroke-width="0.7"/></svg></div>
<div class="a" style="left:207.4px;top:328.2px;color:#676767;letter-spacing:-0.15px">Procedure Instructions- After Planned</div>
<div class="a" style="left:418.4px;top:328.2px;color:#676767;letter-spacing:0.05px">Procedure</div>
<div class="a" style="left:543.4px;top:328.2px;color:#676767;letter-spacing:0px">Inactive</div>
<div class="a" style="left:611.4px;top:328.2px;color:#676767;letter-spacing:-0.12px">06/05/2018 12:24 PM</div>
<div class="a" style="left:725.4px;top:328.2px;color:#676767;letter-spacing:0.12px">administrator</div>
<div class="a" style="left:815.4px;top:328.2px;color:#676767;letter-spacing:-0.12px">06/05/2018 12:35 PM</div>
<div class="a" style="left:929.4px;top:328.2px;color:#676767;letter-spacing:0.12px">administrator</div>
<div class="a" style="left:141px;top:342.0px;width:878px;height:19px;background:#fff"></div>
<div class="a" style="left:146px;top:346.7px"><svg width="11" height="10" viewBox="0 0 11 10"><path d="M6.4 0.9H1.8Q0.8 0.9 0.8 1.9V7.8Q0.8 8.7 1.8 8.7H7.4Q8.3 8.7 8.3 7.8V5.6" fill="none" stroke="#5c6574" stroke-width="0.95"/><path d="M4.2 7.2L4.6 5.4L9.4 0.6L10.8 2L6 6.8Z" fill="#4a5363"/></svg></div>
<div class="a" style="left:163.6px;top:346.9px"><svg width="9" height="10" viewBox="0 0 9 10"><path d="M2.6 1.5L3.2 0.5H5.8L6.4 1.5" fill="none" stroke="#4f5867" stroke-width="0.9"/><rect x="0" y="1.4" width="9" height="1" fill="#4f5867"/><path d="M1.2 2.4V8.2Q1.2 8.9 1.9 8.9H7.1Q7.8 8.9 7.8 8.2V2.4" fill="none" stroke="#4f5867" stroke-width="0.95"/><path d="M3.1 3.4V7.8M4.5 3.4V7.8M5.9 3.4V7.8" stroke="#6f7885" stroke-width="0.7"/></svg></div>
<div class="a" style="left:207.4px;top:347.2px;color:#676767;letter-spacing:-0.15px">BD - On 5:15 pm</div>
<div class="a" style="left:418.4px;top:347.2px;color:#676767;letter-spacing:0.05px">Birthdate</div>
<div class="a" style="left:543.4px;top:347.2px;color:#676767;letter-spacing:0px">Active</div>
<div class="a" style="left:611.4px;top:347.2px;color:#676767;letter-spacing:-0.12px">16/01/2018 05:12 PM</div>
<div class="a" style="left:725.4px;top:347.2px;color:#676767;letter-spacing:0.12px">Dr. Samar</div>
<div class="a" style="left:815.4px;top:347.2px;color:#676767;letter-spacing:-0.12px">07/08/2018 02:28 PM</div>
<div class="a" style="left:929.4px;top:347.2px;color:#676767;letter-spacing:0.12px">administrator</div>
<div class="a" style="left:141px;top:361.0px;width:878px;height:19px;background:#fafafa"></div>
<div class="a" style="left:146px;top:365.7px"><svg width="11" height="10" viewBox="0 0 11 10"><path d="M6.4 0.9H1.8Q0.8 0.9 0.8 1.9V7.8Q0.8 8.7 1.8 8.7H7.4Q8.3 8.7 8.3 7.8V5.6" fill="none" stroke="#5c6574" stroke-width="0.95"/><path d="M4.2 7.2L4.6 5.4L9.4 0.6L10.8 2L6 6.8Z" fill="#4a5363"/></svg></div>
<div class="a" style="left:163.6px;top:365.9px"><svg width="9" height="10" viewBox="0 0 9 10"><path d="M2.6 1.5L3.2 0.5H5.8L6.4 1.5" fill="none" stroke="#4f5867" stroke-width="0.9"/><rect x="0" y="1.4" width="9" height="1" fill="#4f5867"/><path d="M1.2 2.4V8.2Q1.2 8.9 1.9 8.9H7.1Q7.8 8.9 7.8 8.2V2.4" fill="none" stroke="#4f5867" stroke-width="0.95"/><path d="M3.1 3.4V7.8M4.5 3.4V7.8M5.9 3.4V7.8" stroke="#6f7885" stroke-width="0.7"/></svg></div>
<div class="a" style="left:207.4px;top:366.2px;color:#676767;letter-spacing:-0.15px">BD Before</div>
<div class="a" style="left:418.4px;top:366.2px;color:#676767;letter-spacing:0.05px">Birthdate</div>
<div class="a" style="left:543.4px;top:366.2px;color:#676767;letter-spacing:0px">Active</div>
<div class="a" style="left:611.4px;top:366.2px;color:#676767;letter-spacing:-0.12px">06/05/2018 02:46 PM</div>
<div class="a" style="left:725.4px;top:366.2px;color:#676767;letter-spacing:0.12px">administrator</div>
<div class="a" style="left:815.4px;top:366.2px;color:#676767;letter-spacing:-0.12px">07/08/2018 02:30 PM</div>
<div class="a" style="left:929.4px;top:366.2px;color:#676767;letter-spacing:0.12px">administrator</div>
<div class="a" style="left:141px;top:380.0px;width:878px;height:19px;background:#fff"></div>
<div class="a" style="left:146px;top:384.7px"><svg width="11" height="10" viewBox="0 0 11 10"><path d="M6.4 0.9H1.8Q0.8 0.9 0.8 1.9V7.8Q0.8 8.7 1.8 8.7H7.4Q8.3 8.7 8.3 7.8V5.6" fill="none" stroke="#5c6574" stroke-width="0.95"/><path d="M4.2 7.2L4.6 5.4L9.4 0.6L10.8 2L6 6.8Z" fill="#4a5363"/></svg></div>
<div class="a" style="left:163.6px;top:384.9px"><svg width="9" height="10" viewBox="0 0 9 10"><path d="M2.6 1.5L3.2 0.5H5.8L6.4 1.5" fill="none" stroke="#4f5867" stroke-width="0.9"/><rect x="0" y="1.4" width="9" height="1" fill="#4f5867"/><path d="M1.2 2.4V8.2Q1.2 8.9 1.9 8.9H7.1Q7.8 8.9 7.8 8.2V2.4" fill="none" stroke="#4f5867" stroke-width="0.95"/><path d="M3.1 3.4V7.8M4.5 3.4V7.8M5.9 3.4V7.8" stroke="#6f7885" stroke-width="0.7"/></svg></div>
<div class="a" style="left:207.4px;top:385.2px;color:#676767;letter-spacing:-0.15px">Patient&#39;s Changed Appointment</div>
<div class="a" style="left:418.4px;top:385.2px;color:#676767;letter-spacing:0.05px">Appointment Changed</div>
<div class="a" style="left:543.4px;top:385.2px;color:#676767;letter-spacing:0px">Active</div>
<div class="a" style="left:611.4px;top:385.2px;color:#676767;letter-spacing:-0.12px">04/10/2018 03:56 PM</div>
<div class="a" style="left:725.4px;top:385.2px;color:#676767;letter-spacing:0.12px">administrator</div>
<div class="a" style="left:815.4px;top:385.2px;color:#676767;letter-spacing:-0.12px">04/10/2018 03:56 PM</div>
<div class="a" style="left:929.4px;top:385.2px;color:#676767;letter-spacing:0.12px">administrator</div>
<div class="a" style="left:141px;top:113.6px;width:878px;height:1px;background:#dcdcdc"></div>
<div class="a" style="left:202px;top:114px;width:1px;height:285px;background:#e4e4e4"></div>
<div class="a" style="left:413px;top:114px;width:1px;height:285px;background:#e4e4e4"></div>
<div class="a" style="left:538px;top:114px;width:1px;height:285px;background:#e4e4e4"></div>
<div class="a" style="left:606px;top:114px;width:1px;height:285px;background:#e4e4e4"></div>
<div class="a" style="left:720px;top:114px;width:1px;height:285px;background:#e4e4e4"></div>
<div class="a" style="left:810px;top:114px;width:1px;height:285px;background:#e4e4e4"></div>
<div class="a" style="left:924px;top:114px;width:1px;height:285px;background:#e4e4e4"></div>
<div class="a" style="left:141px;top:399px;width:878px;height:25px;border-top:1px solid #d9d9d9;background:linear-gradient(#f6f6f6,#ededed)"></div>
<div class="a" style="left:144px;top:403px;width:17.6px;height:17.6px;border:1px solid #d6d6d6;border-radius:50%"></div>
<svg class="a" style="left:148.8px;top:407.8px" width="8" height="8" viewBox="0 0 8 8"><rect x="1.3" y="1.5" width="1.2" height="5" fill="#a8a8a8"/><path d="M6.7 1.5V6.5L2.8 4Z" fill="#a8a8a8"/></svg>
<div class="a" style="left:163.3px;top:403px;width:17.6px;height:17.6px;border:1px solid #d6d6d6;border-radius:50%"></div>
<svg class="a" style="left:168.10000000000002px;top:407.8px" width="8" height="8" viewBox="0 0 8 8"><path d="M5.6 1.5V6.5L2.2 4Z" fill="#a8a8a8"/></svg>
<div class="a" style="left:183.6px;top:403px;width:18.3px;height:18.3px;background:#2a8bd3;border-radius:50%"></div>
<div class="a" style="left:183.6px;top:406.8px;width:18.3px;text-align:center;color:#fff;font-size:9px">1</div>
<div class="a" style="left:209.4px;top:406.8px;color:#555;font-size:9px">2</div>
<div class="a" style="left:228.6px;top:406.8px;color:#555;font-size:9px">3</div>
<div class="a" style="left:242.1px;top:403px;width:17.6px;height:17.6px;border:1px solid #d6d6d6;border-radius:50%"></div>
<svg class="a" style="left:246.9px;top:407.8px" width="8" height="8" viewBox="0 0 8 8"><path d="M2.6 1.5V6.5L6 4Z" fill="#4a4f57"/></svg>
<div class="a" style="left:262.2px;top:403px;width:17.6px;height:17.6px;border:1px solid #d6d6d6;border-radius:50%"></div>
<svg class="a" style="left:267.0px;top:407.8px" width="8" height="8" viewBox="0 0 8 8"><path d="M1.3 1.5V6.5L5.2 4Z" fill="#4a4f57"/><rect x="5.5" y="1.5" width="1.2" height="5" fill="#4a4f57"/></svg>
<div class="a" style="left:920px;top:406.5px;color:#595959;letter-spacing:-0.12px">1 - 15 of 35 items</div>
<svg class="a" style="left:1000px;top:404px" width="14" height="14" viewBox="0 0 14 14"><path d="M11.3 5.8A4.7 4.7 0 1 1 6.9 3.3" fill="none" stroke="#3c4450" stroke-width="1.7"/><path d="M6.4 1.2L10.5 3.4L6.4 5.6Z" fill="#3c4450"/></svg>
<div class="a" style="left:523px;top:113.8px;width:120.3px;height:86.6px;background:#f4f4f4;border:1px solid #dedede;box-shadow:1px 2px 3px rgba(0,0,0,.16)"></div>
<div class="a" style="left:528px;top:121px;color:#6c6c6c;letter-spacing:-0.12px">Show items with value that:</div>
<div class="a" style="left:528.2px;top:133.2px;width:109.4px;height:17.6px;background:linear-gradient(#fafafa,#efefef);border:1px solid #dadada;border-radius:2px"></div>
<div class="a" style="left:538px;top:137px;color:#505050;letter-spacing:-0.1px">Contains</div>
<svg class="a" style="left:626.3px;top:140px" width="6" height="5" viewBox="0 0 6 5"><path d="M0.2 0.3H5.8L3 4.7Z" fill="#3f4650"/></svg>
<div class="a" style="left:533.9px;top:147.8px;width:47px;height:3.9px;background:#ea1c2a;border-radius:2px"></div>
<div class="a" style="left:528px;top:153px;width:109.4px;height:16.6px;background:#fff;border:1px solid #dadada;border-radius:2px;box-shadow:inset 0 1px 1px rgba(0,0,0,.05)"></div>
<div class="a" style="left:534.3px;top:156.8px;color:#555;letter-spacing:-0.05px">Birthdate</div>
<div class="a" style="left:570px;top:156px;width:1px;height:10.5px;background:#333"></div>
<div class="a" style="left:528px;top:176.8px;width:53.2px;height:18px;background:linear-gradient(#46a8ec,#2c8bd3);border:1px solid #2b86ca;border-radius:2px"></div>
<div class="a" style="left:528px;top:181.2px;width:53.2px;text-align:center;color:#fff">Filter</div>
<div class="a" style="left:586px;top:177.2px;width:51.4px;height:17.6px;background:linear-gradient(#fafafa,#ededed);border:1px solid #d8d8d8;border-radius:2px"></div>
<div class="a" style="left:586px;top:181.2px;width:51.4px;text-align:center;color:#555">Clear</div>
<svg class="a" style="left:560px;top:180px" width="32" height="32" viewBox="0 0 32 32"><path fill-rule="evenodd" fill="#e9141f" d="M15.6 5.1L26.4 17.2H21.8V27.6H9.8V17.2H4.8Z M15.6 10.05L19.03 13.9H18.5V24.3H13.1V13.9H12.17Z"/></svg>
</body></html>
